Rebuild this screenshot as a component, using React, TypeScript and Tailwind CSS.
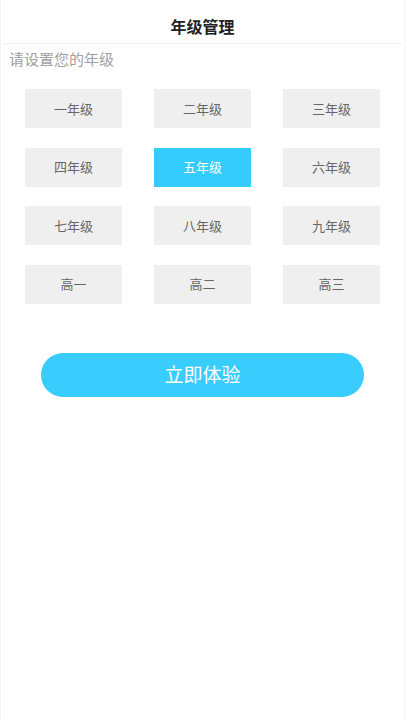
import React from "react";

const grades = [
  "一年级", "二年级", "三年级",
  "四年级", "五年级", "六年级",
  "七年级", "八年级", "九年级",
  "高一", "高二", "高三",
];

export default function App() {
  const font = { fontFamily: '"Noto Sans CJK SC", "Noto Sans", sans-serif' };
  return (
    <div className="w-[405px] h-[720px] bg-white flex flex-col border-x border-[#f3f3f3]" style={font}>
      <div className="h-[44px] flex items-center justify-center pt-[8px] border-b border-[#f0f0f0] mx-[2px]">
        <span className="text-[16px] font-bold text-[#222] leading-none">年级管理</span>
      </div>
      <div className="pl-[8px] pt-[5px] text-[15px] leading-[20px] text-[#a0a0a0]">请设置您的年级</div>
      <div className="grid grid-cols-[97px_97px_97px] gap-x-[32px] gap-y-[19.5px] pl-[24px] pt-[20px]">
        {grades.map((g, i) => (
          <div
            key={g}
            className={
              i === 4
                ? "h-[39px] flex items-center justify-center bg-[#33ccfd] text-white text-[13px]"
                : "h-[39px] flex items-center justify-center bg-[#efefef] text-[#666] text-[13px]"
            }
          >
            {g}
          </div>
        ))}
      </div>
      <div className="pl-[40px] pt-[49px]">
        <div className="w-[323px] h-[44px] rounded-full bg-[#38cdfc] flex items-center justify-center text-white text-[19px]">
          立即体验
        </div>
      </div>
    </div>
  );
}
